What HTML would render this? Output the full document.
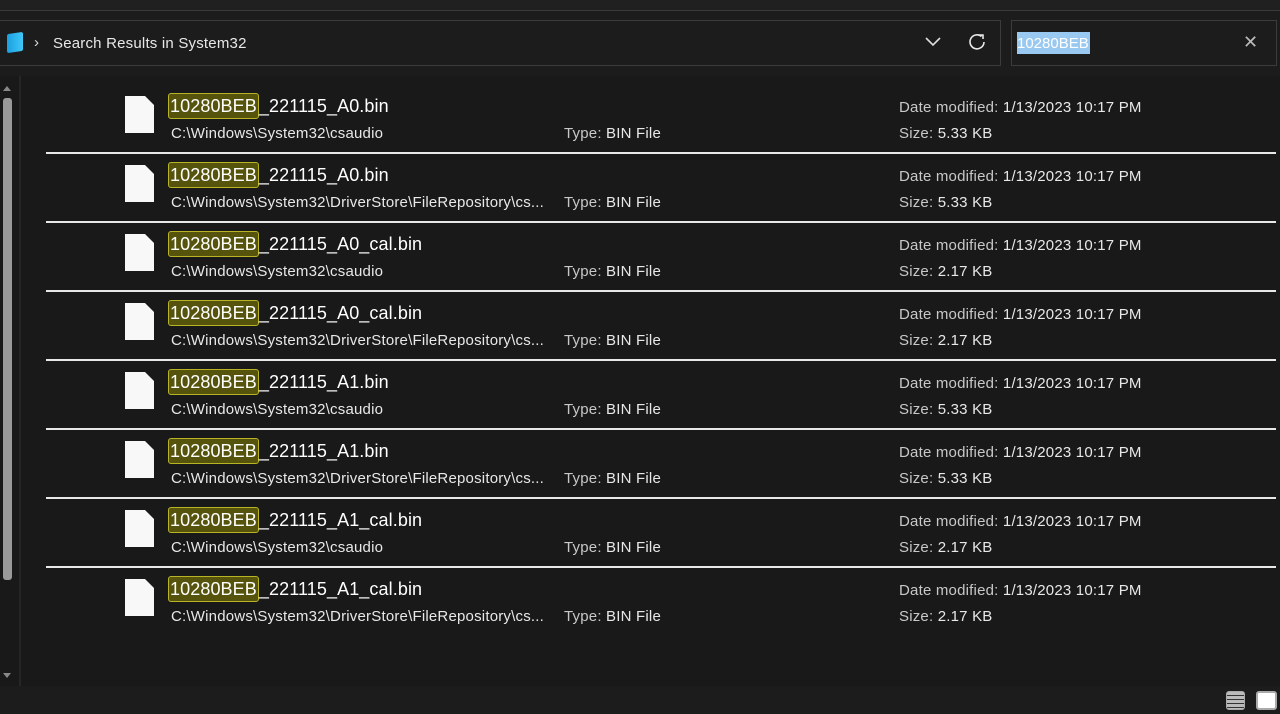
<!DOCTYPE html>
<html><head><style>
body{margin:0;width:1280px;height:714px;background:#191919;font-family:"Liberation Sans",sans-serif;color:#fff;position:relative;overflow:hidden}
.a{position:absolute}
.row{position:absolute;left:0;width:1280px;height:69px}
.ic{position:absolute;left:125px;top:6px;width:29px;height:37px;background:#f8f8f8;clip-path:polygon(0 0,20px 0,29px 9px,29px 37px,0 37px)}
.nm{position:absolute;left:168px;top:3px;font-size:18px;white-space:nowrap;line-height:26px;letter-spacing:0.1px}
.hl{background:#56540c;border:1px solid #b8b424;border-radius:3px;padding:0 1px;display:inline-block;line-height:24px}
.sm{position:absolute;font-size:15px;color:#e8e8e8;white-space:nowrap;letter-spacing:0.2px}
.g{color:#c8c8c8}
.ln{position:absolute;left:46px;width:1230px;height:2px;background:#e8e8e8}
</style></head><body>
<div class="a" style="left:0;top:0;width:1280px;height:10px;background:#202020;border-bottom:1px solid #3a3a3a"></div>
<div class="a" style="left:0;top:11px;width:1280px;height:65px;background:#1c1c1c"></div>
<div class="a" style="left:-1px;top:20px;width:1000px;height:44px;border:1px solid #3c3c3c;background:#1c1c1c"></div>
<div class="a" style="left:7px;top:33px;width:16px;height:19px;background:linear-gradient(90deg,#1a9fe0,#40c8f8);border-radius:2px;transform:skewY(-8deg)"></div>
<div class="a" style="left:34px;top:34px;font-size:15px;color:#ddd">›</div>
<div class="a" style="left:53px;top:35px;font-size:15px;color:#e8e8e8;letter-spacing:0.2px">Search Results in System32</div>
<svg class="a" style="left:924px;top:35px" width="18" height="12"><path d="M2 3 L9 10 L16 3" stroke="#ddd" stroke-width="1.6" fill="none"/></svg>
<svg class="a" style="left:968px;top:32px" width="20" height="20"><path d="M16 10 A7 7 0 1 1 13.5 4.5" stroke="#e8e8e8" stroke-width="1.6" fill="none"/><path d="M11 3 L15 3 L15 7" stroke="#e8e8e8" stroke-width="1.6" fill="none"/></svg>
<div class="a" style="left:1011px;top:20px;width:264px;height:44px;border:1px solid #3c3c3c;background:#1c1c1c"></div>
<div class="a" style="left:1017px;top:32px;width:73px;height:22px;background:#99c9f0;color:#fff;font-size:15px;line-height:23px">10280BEB</div>
<div class="a" style="left:1243px;top:32px;font-size:18px;color:#bbb">✕</div>
<div class="a" style="left:19px;top:76px;width:2px;height:610px;background:#262626"></div>
<div class="a" style="left:3px;top:86px;width:0;height:0;border-left:4px solid transparent;border-right:4px solid transparent;border-bottom:5px solid #888"></div>
<div class="a" style="left:3px;top:98px;width:9px;height:482px;background:#9a9a9a;border-radius:3px"></div>
<div class="a" style="left:3px;top:673px;width:0;height:0;border-left:4px solid transparent;border-right:4px solid transparent;border-top:5px solid #888"></div>
<div class="a" style="left:0;top:686px;width:1280px;height:28px;background:#1c1c1c"></div>
<div class="a" style="left:1226px;top:691px;width:19px;height:19px;border:1px solid #aaa;border-radius:3px;background:#bbb;box-sizing:border-box;background-image:repeating-linear-gradient(#bbb 0 3px,#333 3px 4px)"></div>
<div class="a" style="left:1256px;top:691px;width:21px;height:19px;border:2px solid #aaa;border-radius:3px;background:#fff;box-sizing:border-box"></div>

<div class="row" style="top:90px"><div class="ic"></div><div class="nm"><span class="hl">10280BEB</span>_221115_A0.bin</div><div class="sm" style="left:171px;top:35px">C:\Windows\System32\csaudio</div><div class="sm" style="left:564px;top:35px"><span class="g">Type:</span> BIN File</div><div class="sm" style="left:899px;top:9px"><span class="g">Date modified:</span> 1/13/2023 10:17 PM</div><div class="sm" style="left:899px;top:35px"><span class="g">Size:</span> 5.33 KB</div></div>
<div class="ln" style="top:152px"></div>
<div class="row" style="top:159px"><div class="ic"></div><div class="nm"><span class="hl">10280BEB</span>_221115_A0.bin</div><div class="sm" style="left:171px;top:35px">C:\Windows\System32\DriverStore\FileRepository\cs...</div><div class="sm" style="left:564px;top:35px"><span class="g">Type:</span> BIN File</div><div class="sm" style="left:899px;top:9px"><span class="g">Date modified:</span> 1/13/2023 10:17 PM</div><div class="sm" style="left:899px;top:35px"><span class="g">Size:</span> 5.33 KB</div></div>
<div class="ln" style="top:221px"></div>
<div class="row" style="top:228px"><div class="ic"></div><div class="nm"><span class="hl">10280BEB</span>_221115_A0_cal.bin</div><div class="sm" style="left:171px;top:35px">C:\Windows\System32\csaudio</div><div class="sm" style="left:564px;top:35px"><span class="g">Type:</span> BIN File</div><div class="sm" style="left:899px;top:9px"><span class="g">Date modified:</span> 1/13/2023 10:17 PM</div><div class="sm" style="left:899px;top:35px"><span class="g">Size:</span> 2.17 KB</div></div>
<div class="ln" style="top:290px"></div>
<div class="row" style="top:297px"><div class="ic"></div><div class="nm"><span class="hl">10280BEB</span>_221115_A0_cal.bin</div><div class="sm" style="left:171px;top:35px">C:\Windows\System32\DriverStore\FileRepository\cs...</div><div class="sm" style="left:564px;top:35px"><span class="g">Type:</span> BIN File</div><div class="sm" style="left:899px;top:9px"><span class="g">Date modified:</span> 1/13/2023 10:17 PM</div><div class="sm" style="left:899px;top:35px"><span class="g">Size:</span> 2.17 KB</div></div>
<div class="ln" style="top:359px"></div>
<div class="row" style="top:366px"><div class="ic"></div><div class="nm"><span class="hl">10280BEB</span>_221115_A1.bin</div><div class="sm" style="left:171px;top:35px">C:\Windows\System32\csaudio</div><div class="sm" style="left:564px;top:35px"><span class="g">Type:</span> BIN File</div><div class="sm" style="left:899px;top:9px"><span class="g">Date modified:</span> 1/13/2023 10:17 PM</div><div class="sm" style="left:899px;top:35px"><span class="g">Size:</span> 5.33 KB</div></div>
<div class="ln" style="top:428px"></div>
<div class="row" style="top:435px"><div class="ic"></div><div class="nm"><span class="hl">10280BEB</span>_221115_A1.bin</div><div class="sm" style="left:171px;top:35px">C:\Windows\System32\DriverStore\FileRepository\cs...</div><div class="sm" style="left:564px;top:35px"><span class="g">Type:</span> BIN File</div><div class="sm" style="left:899px;top:9px"><span class="g">Date modified:</span> 1/13/2023 10:17 PM</div><div class="sm" style="left:899px;top:35px"><span class="g">Size:</span> 5.33 KB</div></div>
<div class="ln" style="top:497px"></div>
<div class="row" style="top:504px"><div class="ic"></div><div class="nm"><span class="hl">10280BEB</span>_221115_A1_cal.bin</div><div class="sm" style="left:171px;top:35px">C:\Windows\System32\csaudio</div><div class="sm" style="left:564px;top:35px"><span class="g">Type:</span> BIN File</div><div class="sm" style="left:899px;top:9px"><span class="g">Date modified:</span> 1/13/2023 10:17 PM</div><div class="sm" style="left:899px;top:35px"><span class="g">Size:</span> 2.17 KB</div></div>
<div class="ln" style="top:566px"></div>
<div class="row" style="top:573px"><div class="ic"></div><div class="nm"><span class="hl">10280BEB</span>_221115_A1_cal.bin</div><div class="sm" style="left:171px;top:35px">C:\Windows\System32\DriverStore\FileRepository\cs...</div><div class="sm" style="left:564px;top:35px"><span class="g">Type:</span> BIN File</div><div class="sm" style="left:899px;top:9px"><span class="g">Date modified:</span> 1/13/2023 10:17 PM</div><div class="sm" style="left:899px;top:35px"><span class="g">Size:</span> 2.17 KB</div></div>
</body></html>
